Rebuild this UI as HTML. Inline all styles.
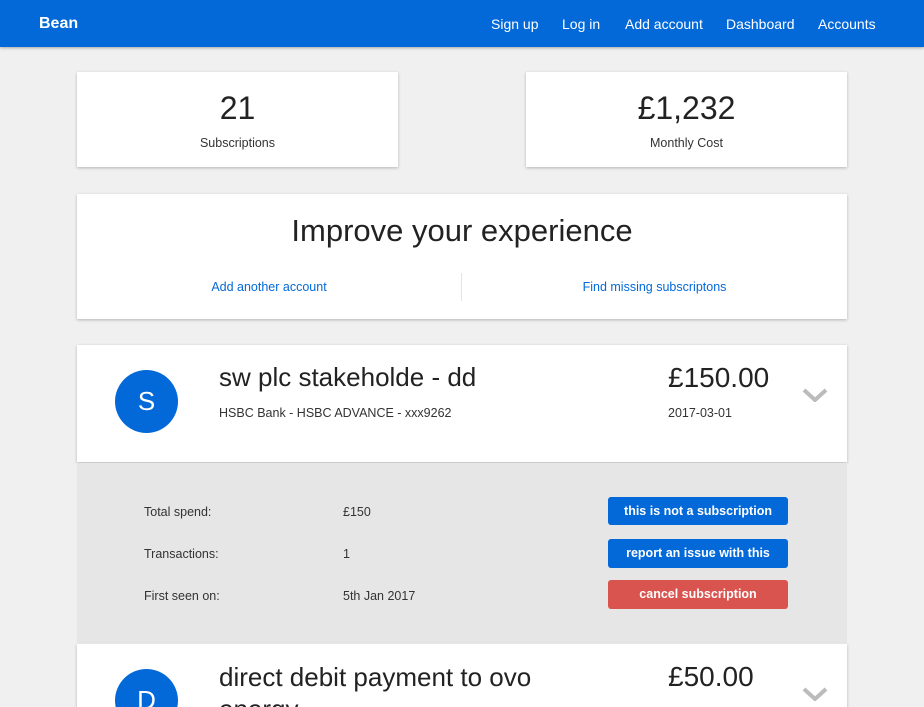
<!DOCTYPE html><html><head><style>
html,body{margin:0;width:924px;height:707px;overflow:hidden}
body{background:#f0f0f0;font-family:"Liberation Sans",sans-serif;color:#333;position:relative}
.a{position:absolute}
.nav{left:0;top:0;width:924px;height:47px;background:#0369d9;box-shadow:0 1px 3px rgba(0,0,0,.3)}
.nav span{position:absolute;top:16px;color:#fff;font-size:14px}
.card{background:#fff;box-shadow:0 1px 3px rgba(0,0,0,.25)}
.c{text-align:center}
.btn{position:absolute;left:608px;width:180px;height:28px;border-radius:3px;color:#fff;font-size:12.5px;font-weight:bold;text-align:center;line-height:28px;background:#0369d9}
.chev{position:absolute;left:802px;width:26px;height:14px}
</style></head><body>
<div class="a nav"><span style="left:39px;font-size:16px;top:15px;font-weight:bold">Bean</span><span style="left:491px">Sign up</span><span style="left:562px">Log in</span><span style="left:625px">Add account</span><span style="left:726px">Dashboard</span><span style="left:818px">Accounts</span></div>
<div class="a card c" style="left:77px;top:72px;width:321px;height:95px"><div style="font-size:32px;margin-top:18px;color:#222">21</div><div style="font-size:12.5px;margin-top:9px">Subscriptions</div></div>
<div class="a card c" style="left:526px;top:72px;width:321px;height:95px"><div style="font-size:32px;margin-top:18px;color:#222">£1,232</div><div style="font-size:12.5px;margin-top:9px">Monthly Cost</div></div>
<div class="a card" style="left:77px;top:194px;width:770px;height:125px"><div class="c" style="font-size:31px;margin-top:19px;color:#222">Improve your experience</div>
<div class="a" style="left:384px;top:79px;width:1px;height:28px;background:#e4e4e4"></div>
<div class="a c" style="left:0;width:384px;top:86px;font-size:12.5px;color:#0369d9">Add another account</div>
<div class="a c" style="left:385px;width:385px;top:86px;font-size:12.5px;color:#0369d9">Find missing subscriptons</div></div>
<div class="a card" style="left:77px;top:345px;width:770px;height:117px"></div>
<div class="a" style="left:115px;top:370px;width:63px;height:63px;border-radius:50%;background:#0369d9;color:#fff;font-size:26px;text-align:center;line-height:63px">S</div>
<div class="a" style="left:219px;top:362px;font-size:26px;color:#222">sw plc stakeholde - dd</div>
<div class="a" style="left:219px;top:406px;font-size:12.5px">HSBC Bank - HSBC ADVANCE - xxx9262</div>
<div class="a" style="left:668px;top:362px;font-size:28px;color:#222">£150.00</div>
<div class="a" style="left:668px;top:406px;font-size:12.5px">2017-03-01</div>
<svg class="chev" style="top:388px" viewBox="0 0 26 14"><path d="M2 2L13 12L24 2" stroke="#bbb" stroke-width="4" fill="none"/></svg>
<div class="a" style="left:77px;top:463px;width:770px;height:180px;background:#e6e6e6"></div>
<div class="a" style="left:144px;top:505px;font-size:12.5px">Total spend:</div><div class="a" style="left:343px;top:505px;font-size:12.5px">£150</div>
<div class="a" style="left:144px;top:547px;font-size:12.5px">Transactions:</div><div class="a" style="left:343px;top:547px;font-size:12.5px">1</div>
<div class="a" style="left:144px;top:589px;font-size:12.5px">First seen on:</div><div class="a" style="left:343px;top:589px;font-size:12.5px">5th Jan 2017</div>
<div class="btn" style="top:497px">this is not a subscription</div>
<div class="btn" style="top:539px;height:29px">report an issue with this</div>
<div class="btn" style="top:580px;height:29px;background:#d9534f">cancel subscription</div>
<div class="a card" style="left:77px;top:644px;width:770px;height:80px"></div>
<div class="a" style="left:115px;top:669px;width:63px;height:63px;border-radius:50%;background:#0369d9;color:#fff;font-size:26px;text-align:center;line-height:63px">D</div>
<div class="a" style="left:219px;top:661px;font-size:26px;color:#222;line-height:32px;width:360px">direct debit payment to ovo energy</div>
<div class="a" style="left:668px;top:661px;font-size:28px;color:#222">£50.00</div>
<svg class="chev" style="top:687px" viewBox="0 0 26 14"><path d="M2 2L13 12L24 2" stroke="#bbb" stroke-width="4" fill="none"/></svg>
</body></html>
